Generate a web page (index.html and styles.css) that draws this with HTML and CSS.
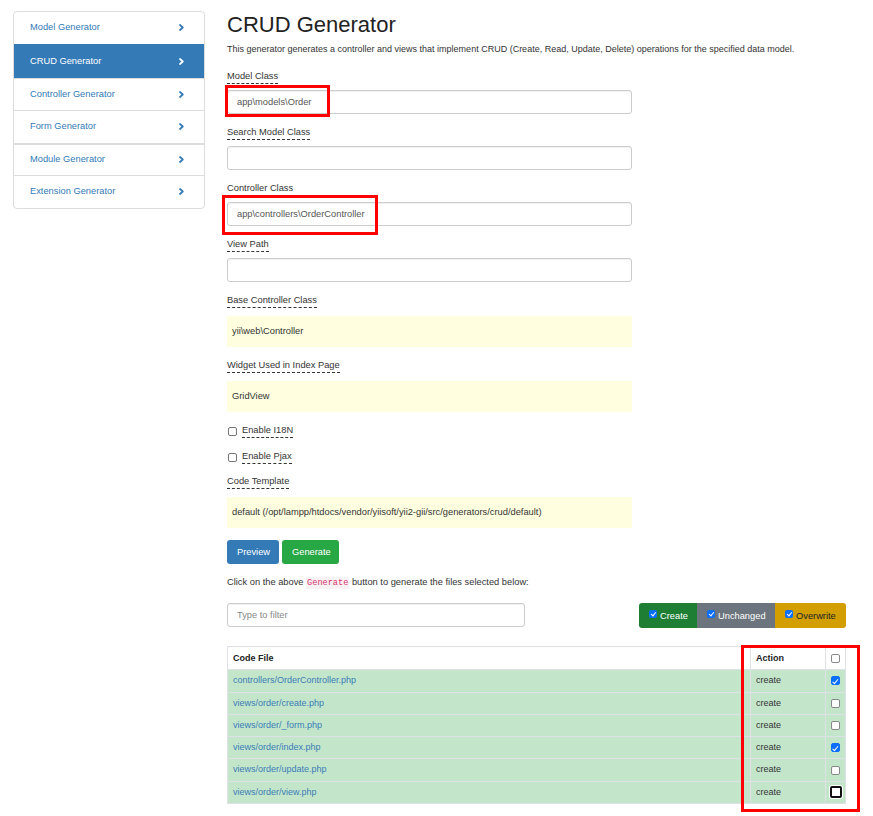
FILE: index.html
```html
<!DOCTYPE html>
<html lang="en">
<head>
<meta charset="utf-8">
<title>CRUD Generator</title>
<link rel="stylesheet" href="styles.css">
</head>
<body>
<div class="page">
  <nav class="sidebar">
    <a class="nav-item" href="#"><span>Model Generator</span><svg class="chev" width="5" height="7" viewBox="0 0 5 7"><polyline points="1,1 3.8,3.5 1,6"/></svg></a>
    <a class="nav-item active" href="#"><span>CRUD Generator</span><svg class="chev" width="5" height="7" viewBox="0 0 5 7"><polyline points="1,1 3.8,3.5 1,6"/></svg></a>
    <a class="nav-item" href="#"><span>Controller Generator</span><svg class="chev" width="5" height="7" viewBox="0 0 5 7"><polyline points="1,1 3.8,3.5 1,6"/></svg></a>
    <a class="nav-item" href="#"><span>Form Generator</span><svg class="chev" width="5" height="7" viewBox="0 0 5 7"><polyline points="1,1 3.8,3.5 1,6"/></svg></a>
    <a class="nav-item sep" href="#"><span>Module Generator</span><svg class="chev" width="5" height="7" viewBox="0 0 5 7"><polyline points="1,1 3.8,3.5 1,6"/></svg></a>
    <a class="nav-item" href="#"><span>Extension Generator</span><svg class="chev" width="5" height="7" viewBox="0 0 5 7"><polyline points="1,1 3.8,3.5 1,6"/></svg></a>
  </nav>

  <main class="main">
    <h1 class="title">CRUD Generator</h1>
    <p class="intro">This generator generates a controller and views that implement CRUD (Create, Read, Update, Delete) operations for the specified data model.</p>

    <div class="field">
      <label class="hint">Model Class</label>
      <input class="input" type="text" value="app\models\Order">
    </div>
    <div class="field">
      <label class="hint">Search Model Class</label>
      <input class="input" type="text" value="">
    </div>
    <div class="field">
      <label class="plain">Controller Class</label>
      <input class="input" type="text" value="app\controllers\OrderController">
    </div>
    <div class="field">
      <label class="hint">View Path</label>
      <input class="input" type="text" value="">
    </div>
    <div class="field">
      <label class="hint">Base Controller Class</label>
      <div class="sticky">yii\web\Controller</div>
    </div>
    <div class="field">
      <label class="hint">Widget Used in Index Page</label>
      <div class="sticky">GridView</div>
    </div>

    <div class="check-row first"><span class="cb"></span><label class="hint">Enable I18N</label></div>
    <div class="check-row"><span class="cb"></span><label class="hint">Enable Pjax</label></div>

    <div class="field template">
      <label class="hint">Code Template</label>
      <div class="sticky">default (/opt/lampp/htdocs/vendor/yiisoft/yii2-gii/src/generators/crud/default)</div>
    </div>

    <div class="buttons">
      <button class="btn btn-preview">Preview</button>
      <button class="btn btn-generate">Generate</button>
    </div>

    <p class="click-note">Click on the above <code>Generate</code> button to generate the files selected below:</p>

    <div class="filter-row">
      <input class="input filter" type="text" placeholder="Type to filter">
      <div class="legend">
        <span class="leg leg-create"><span class="cb mini checked"></span>Create</span>
        <span class="leg leg-unchanged"><span class="cb mini checked"></span>Unchanged</span>
        <span class="leg leg-overwrite"><span class="cb mini checked"></span>Overwrite</span>
      </div>
    </div>

    <table class="files">
      <thead>
        <tr><th>Code File</th><th class="col-action">Action</th><th class="col-check"><span class="cb"></span></th></tr>
      </thead>
      <tbody>
        <tr><td><a href="#">controllers/OrderController.php</a></td><td>create</td><td class="col-check"><span class="cb checked"></span></td></tr>
        <tr><td><a href="#">views/order/create.php</a></td><td>create</td><td class="col-check"><span class="cb"></span></td></tr>
        <tr><td><a href="#">views/order/_form.php</a></td><td>create</td><td class="col-check"><span class="cb"></span></td></tr>
        <tr><td><a href="#">views/order/index.php</a></td><td>create</td><td class="col-check"><span class="cb checked"></span></td></tr>
        <tr><td><a href="#">views/order/update.php</a></td><td>create</td><td class="col-check"><span class="cb"></span></td></tr>
        <tr><td><a href="#">views/order/view.php</a></td><td>create</td><td class="col-check"><span class="cb focus"></span></td></tr>
      </tbody>
    </table>
  </main>
</div>

<div class="annot annot-model"></div>
<div class="annot annot-controller"></div>
<div class="annot annot-actions"></div>
</body>
</html>
```

FILE: styles.css
```css
* { box-sizing: border-box; }

html, body {
  margin: 0;
  padding: 0;
  background: #fff;
}

body {
  position: relative;
  font-family: "Liberation Sans", Arial, sans-serif;
  font-size: 9.3px;
  line-height: 13px;
  color: #333;
  overflow: hidden;
  height: 816px;
}

.page {
  display: flex;
  align-items: flex-start;
  gap: 22px;
  padding: 11px 0 0 13px;
}

/* Sidebar */
.sidebar {
  width: 192px;
  border: 1px solid #ddd;
  border-radius: 4px;
  display: flex;
  flex-direction: column;
  overflow: hidden;
}

.nav-item {
  display: flex;
  align-items: center;
  justify-content: space-between;
  height: 32.5px;
  padding: 0 20px 0 16px;
  color: #337ab7;
  text-decoration: none;
  border-top: 1px solid #ddd;
}

.nav-item:first-child {
  border-top: none;
  height: 31.5px;
}

.nav-item.sep {
  border-top: 2px solid #ddd;
}

.nav-item.active {
  background: #337ab7;
  color: #fff;
  border-top-color: #337ab7;
  height: 34px;
}

.chev {
  fill: none;
  stroke: currentColor;
  stroke-width: 1.7;
  stroke-linecap: round;
  stroke-linejoin: round;
}

/* Main */
.main {
  width: 619px;
  display: flex;
  flex-direction: column;
  align-items: flex-start;
}

.title {
  margin: 2px 0 6px;
  font-size: 22px;
  line-height: 24px;
  font-weight: normal;
  color: #222;
}

.intro {
  margin: 0 0 14px;
  font-size: 9px;
  line-height: 13px;
}

.field {
  display: flex;
  flex-direction: column;
  align-items: flex-start;
  margin-bottom: 12px;
}

.hint,
.plain {
  display: block;
  line-height: 13px;
  border-bottom: 1px dashed #333;
  margin-bottom: 6px;
}

.plain {
  border-bottom-color: transparent;
}

.input {
  width: 405px;
  height: 24px;
  border: 1px solid #ccc;
  border-radius: 3px;
  padding: 0 9px;
  font-family: inherit;
  font-size: 9.3px;
  color: #555;
  background: #fff;
  box-shadow: inset 0 1px 1px rgba(0,0,0,0.06);
  outline: none;
}

.input::placeholder {
  color: #888;
}

.sticky {
  width: 405px;
  height: 31px;
  margin-top: 2px;
  padding: 9px 5px;
  background: #ffffe0;
  color: #333;
}

.check-row {
  display: flex;
  align-items: center;
  gap: 5px;
  margin: 0 0 12px 1px;
}

.check-row .hint {
  margin-bottom: 0;
}

.template {
  margin-top: -1px;
}

/* Checkboxes */
.cb {
  display: inline-block;
  flex: none;
  width: 9px;
  height: 9px;
  border: 1px solid #767676;
  border-radius: 2px;
  background: #fff;
  position: relative;
}

.cb.checked {
  background: #0b6ffd;
  border-color: #0b6ffd;
}

.cb.checked::after {
  content: "";
  position: absolute;
  left: 2.4px;
  top: 0.6px;
  width: 2px;
  height: 4.5px;
  border: solid #fff;
  border-width: 0 1.5px 1.5px 0;
  transform: rotate(40deg);
}

.cb.focus {
  width: 12px;
  height: 12px;
  border: 2px solid #111;
  box-shadow: 0 0 0 1px #fff;
}

/* Buttons */
.buttons {
  display: flex;
  gap: 3px;
  margin-top: 0;
}

.btn {
  height: 24px;
  border: none;
  border-radius: 3px;
  padding: 0 10px;
  font-family: inherit;
  font-size: 9.3px;
  color: #fff;
  cursor: pointer;
}

.btn-preview {
  width: 52px;
  background: #337ab7;
}

.btn-generate {
  width: 57px;
  background: #28a745;
}

.click-note {
  margin: 12px 0 13px;
}

code {
  font-family: "Liberation Mono", "DejaVu Sans Mono", monospace;
  font-size: 8.6px;
  color: #d6336c;
  background: #f9f2f4;
  padding: 1px 1px;
}

.filter-row {
  width: 619px;
  display: flex;
  align-items: flex-start;
  justify-content: space-between;
}

.filter {
  width: 298px;
}

.legend {
  display: flex;
  height: 25px;
  border-radius: 3px;
  overflow: hidden;
}

.leg {
  display: flex;
  align-items: center;
  gap: 3px;
  padding: 1px 10px 0 10px;
  color: #fff;
  white-space: nowrap;
}

.leg .cb.mini {
  width: 8px;
  height: 8px;
  margin-top: -5px;
  border-radius: 1.5px;
}

.leg .cb.mini::after {
  left: 2px;
  top: 0.3px;
  width: 1.8px;
  height: 4px;
}

.leg-create {
  width: 58px;
  background: #1e7e34;
}

.leg-unchanged {
  width: 78px;
  background: #6c757d;
}

.leg-overwrite {
  width: 71px;
  background: #d39e00;
  color: #212529;
}

/* Table */
.files {
  width: 619px;
  margin-top: 18px;
  border-collapse: collapse;
  border: 1px solid #ddd;
  font-size: 9px;
}

.files th,
.files td {
  border: 1px solid #dee2e6;
  padding: 4px 5px;
  line-height: 13.3px;
  text-align: left;
  vertical-align: middle;
}

.files th {
  font-weight: bold;
  color: #222;
  background: #fff;
  padding-top: 4.5px;
  padding-bottom: 4.5px;
}

.files tbody td {
  background: #c3e6cb;
}

.files a {
  color: #3b7cb6;
  text-decoration: none;
}

.files .col-action {
  width: 75px;
}

.files .col-check {
  width: 20px;
  padding: 0;
  text-align: center;
}

.files .col-check .cb {
  vertical-align: middle;
  border-color: #888;
}

.files .col-check .cb.checked {
  border-color: #0b6ffd;
}

.files .col-check .cb.focus {
  border-color: #111;
}

/* Annotations drawn over the screenshot */
.annot {
  position: absolute;
  border: 3px solid #f00;
  pointer-events: none;
}

.annot-model {
  left: 225px;
  top: 85px;
  width: 105px;
  height: 32px;
}

.annot-controller {
  left: 222px;
  top: 195px;
  width: 156px;
  height: 40px;
}

.annot-actions {
  left: 741px;
  top: 645px;
  width: 119px;
  height: 167px;
}
```
